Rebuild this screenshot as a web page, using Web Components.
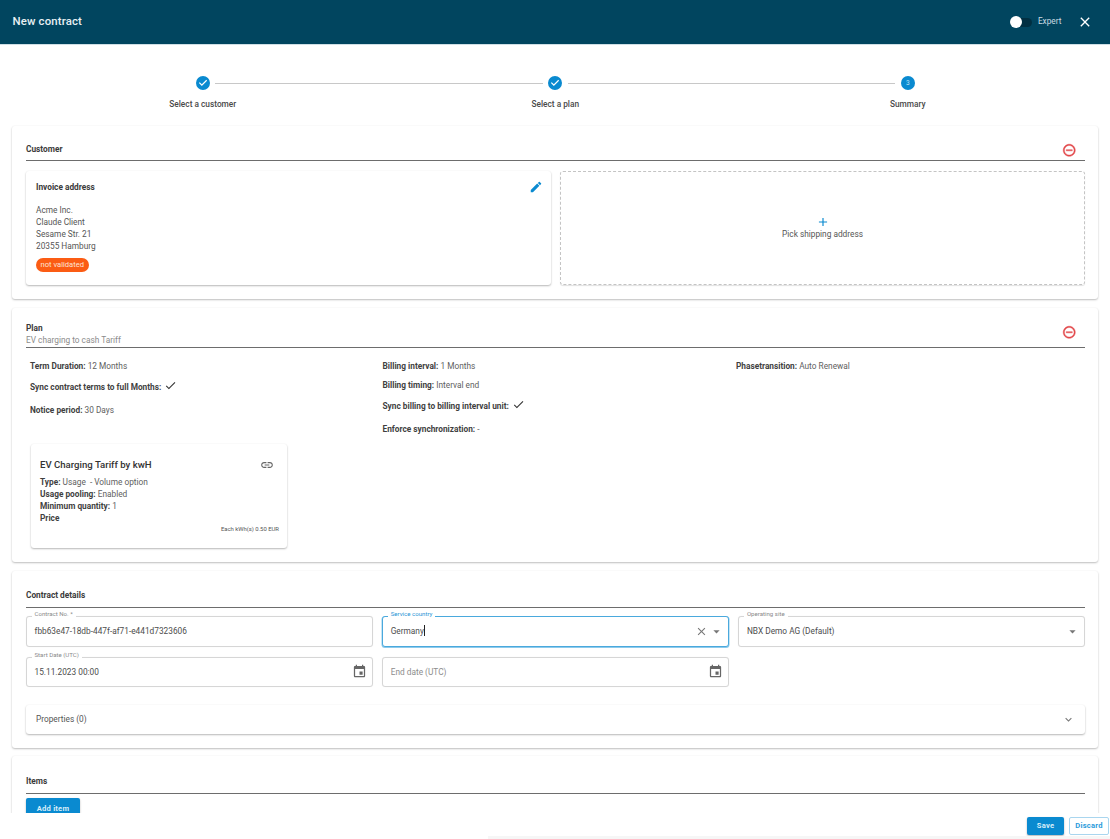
<!DOCTYPE html>
<html lang="en"><head><meta charset="utf-8"><title>New contract</title>
<style>html,body{margin:0;height:100%;background:#fff;font-family:Roboto,"Liberation Sans",sans-serif;color:#444}</style>
</head><body>
<contract-app>
  <contract-header slot="header" title="New contract"></contract-header>
  <step-bar>
    <step-item done>Select a customer</step-item>
    <step-item done>Select a plan</step-item>
    <step-item num="3">Summary</step-item>
  </step-bar>

  <section-card heading="Customer" removable style="--top:16.5px;--gap:5px;--after:10px;--bottom:14px;--ib:-2.25px">
    <div style="display:grid;grid-template-columns:1fr 1fr;gap:9px">
      <address-card></address-card>
      <pick-card>Pick shipping address</pick-card>
    </div>
  </section-card>

  <section-card heading="Plan" sub="EV charging to cash Tariff" removable style="--top:14px;--gap:0px;--after:12px;--bottom:14px;--ib:7.75px">
    <plan-terms></plan-terms>
    <plan-item></plan-item>
  </section-card>

  <section-card heading="Contract details" style="--top:18px;--gap:6px;--after:8px;--bottom:14px">
    <field-grid>
      <text-field label="Contract No. *" value="fbb63e47-18db-447f-af71-e441d7323606"></text-field>
      <text-field label="Service country" value="Germany" focused clearable dropdown></text-field>
      <text-field label="Operating site" value="NBX Demo AG (Default)" dropdown></text-field>
      <text-field label="Start Date (UTC)" value="15.11.2023 00:00" date short></text-field>
      <text-field placeholder="End date (UTC)" date short></text-field>
    </field-grid>
    <expand-row>Properties (0)</expand-row>
  </section-card>

  <section-card heading="Items" style="--top:19px;--gap:6px;--after:4px;--bottom:14px;margin-top:-1px">
    <ui-button primary style="--w:54px;--h:22px">Add item</ui-button>
  </section-card>

  <form-footer slot="footer"></form-footer>
</contract-app>

<script>
const ICONS={
 edit:'M3 17.25V21h3.75L17.81 9.94l-3.75-3.75L3 17.25zM20.71 7.04c.39-.39.39-1.02 0-1.41l-2.34-2.34c-.39-.39-1.02-.39-1.41 0l-1.83 1.83 3.75 3.75 1.83-1.83z',
 close:'M19 6.41 17.59 5 12 10.59 6.41 5 5 6.41 10.59 12 5 17.59 6.41 19 12 13.41 17.59 19 19 17.59 13.41 12z',
 remove:'M7 11v2h10v-2H7zm5-9C6.48 2 2 6.48 2 12s4.48 10 10 10 10-4.48 10-10S17.52 2 12 2zm0 18c-4.41 0-8-3.59-8-8s3.59-8 8-8 8 3.59 8 8-3.59 8-8 8z',
 check:'M9 16.17 4.83 12l-1.42 1.41L9 19 21 7l-1.41-1.41z',
 link:'M3.9 12c0-1.71 1.39-3.1 3.1-3.1h4V7H7c-2.76 0-5 2.24-5 5s2.24 5 5 5h4v-1.9H7c-1.71 0-3.1-1.39-3.1-3.1zM8 13h8v-2H8v2zm9-6h-4v1.9h4c1.71 0 3.1 1.39 3.1 3.1s-1.39 3.1-3.1 3.1h-4V17h4c2.76 0 5-2.24 5-5s-2.24-5-5-5z',
 event:'M17 12h-5v5h5v-5zM16 1v2H8V1H6v2H5c-1.11 0-1.99.9-1.99 2L3 19c0 1.1.89 2 2 2h14c1.1 0 2-.9 2-2V5c0-1.1-.9-2-2-2h-1V1h-2zm3 18H5V8h14v11z',
 drop:'M7 10l5 5 5-5z',
 more:'M16.59 8.59 12 13.17 7.41 8.59 6 10l6 6 6-6z',
 add:'M19 13h-6v6h-2v-6H5v-2h6V5h2v6h6v2z',
 stepdone:'M12 0a12 12 0 1 0 0 24 12 12 0 0 0 0-24zm-2 17l-5-5 1.4-1.4 3.6 3.6 7.6-7.6L19 8l-9 9z'
};
class Base extends HTMLElement{
  render(html){ if(!this.shadowRoot) this.attachShadow({mode:'open'}); this.shadowRoot.innerHTML=html; }
}
const def=(n,c)=>customElements.define(n,c);

def('ui-icon',class extends Base{connectedCallback(){
  const n=this.getAttribute('name');
  this.render(`<style>:host{display:inline-flex;flex:none;width:var(--s,16px);height:var(--s,16px);color:var(--c,currentColor)}svg{width:100%;height:100%;fill:currentColor;stroke:currentColor;stroke-width:var(--sw,0);display:block}</style><svg viewBox="0 0 24 24" aria-hidden="true"><path d="${ICONS[n]}"/></svg>`);
}});

def('contract-app',class extends Base{connectedCallback(){
  this.render(`<style>
   :host{display:flex;flex-direction:column;height:839px;width:1110px;overflow:hidden;background:#fff}
   .scroll{flex:1;min-height:0;overflow:hidden;padding:0 12px;display:flex;flex-direction:column;gap:9px}
  </style><slot name="header"></slot><div class="scroll"><slot></slot></div><slot name="footer"></slot>`);
}});

def('contract-header',class extends Base{connectedCallback(){
  this.render(`<style>
   :host{display:flex;flex:none;align-items:center;height:45px;background:#01455f;color:#fff;padding:0 17.5px 0 12.5px;box-sizing:border-box;border-bottom:1px solid #cfdfe5}
   h1{font:500 11.4px/14px Roboto,sans-serif;margin:0 auto 2px 0;letter-spacing:.15px;color:#e8f0f3}
   .track{width:22px;height:9px;border-radius:5px;background:#012f42;display:flex;align-items:center;margin-right:6px}
   .thumb{width:12px;height:12px;border-radius:50%;background:#fff}
   .t{font:400 8.3px/12px Roboto,sans-serif;color:#c9dbe2;margin:-3px 15px 0 0}
   ui-icon{--s:16px}
  </style><h1>${this.getAttribute('title')}</h1><div class="track"><div class="thumb"></div></div><span class="t">Expert</span><ui-icon name="close"></ui-icon>`);
}});

def('step-bar',class extends Base{connectedCallback(){
  this.render(`<style>:host{display:grid;flex:none;grid-template-columns:repeat(3,352.5px);justify-content:center;padding-top:31px;margin:0 0 7px .5px}</style><slot></slot>`);
}});
def('step-item',class extends Base{connectedCallback(){
  const done=this.hasAttribute('done'),last=!done;
  const first=!this.previousElementSibling;
  this.render(`<style>
   :host{display:flex;flex-direction:column;align-items:stretch}
   .row{display:flex;align-items:center;height:14px}
   .seg{flex:1;height:1px;background:#c8c8c8}
   .off{background:transparent}
   .l{margin-right:5.5px}.r{margin-left:5.5px}
   .c{width:14px;height:14px;flex:none;color:#0a8ad0;--s:14px;display:flex}
   .n{width:14px;height:14px;flex:none;border-radius:50%;background:#0a8ad0;color:#bfe0f3;font:400 6.6px/14px Roboto,sans-serif;text-align:center}
   .lb{text-align:center;font:500 8.3px/12px Roboto,sans-serif;color:#4a4a4a;margin-top:8px}
  </style><div class="row"><span class="seg l ${first?'off':''}"></span>${done?'<span class="c"><ui-icon name="stepdone"></ui-icon></span>':`<span class="n">${this.getAttribute('num')}</span>`}<span class="seg r ${last?'off':''}"></span></div><div class="lb"><slot></slot></div>`);
}});

def('section-card',class extends Base{connectedCallback(){
  const sub=this.getAttribute('sub');
  this.render(`<style>
   :host{display:block;flex:none;background:#fff;border-radius:3px;padding:var(--top) 13px var(--bottom) 14px;box-shadow:0 1px 2px rgba(0,0,0,.25),0 0 2px rgba(0,0,0,.04)}
   .head{display:flex;align-items:flex-end;border-bottom:1px solid #6d6d6d;padding-bottom:var(--gap);margin-bottom:var(--after)}
   .txt{flex:1}
   h2{font:700 8.3px/12px Roboto,sans-serif;margin:0;color:#3a3a3a}
   p{font:400 8.3px/13px Roboto,sans-serif;margin:0;color:#8b8b8b}
   ui-icon{--s:14.5px;--c:#e2474a;--sw:.7;margin:0 9px var(--ib,0) 0}
  </style><div class="head"><div class="txt"><h2>${this.getAttribute('heading')}</h2>${sub?`<p>${sub}</p>`:''}</div>${this.hasAttribute('removable')?'<ui-icon name="remove"></ui-icon>':''}</div><slot></slot>`);
}});

def('address-card',class extends Base{connectedCallback(){
  this.render(`<style>
   :host{display:flex;justify-content:space-between;height:114px;box-sizing:border-box;padding:10px 8px 0 10px;border-radius:3px;background:#fff;box-shadow:0 1px 2px rgba(0,0,0,.28),0 0 2px rgba(0,0,0,.04);font:400 8.3px/12.3px Roboto,sans-serif;color:#555}
   b{display:block;font-weight:700;color:#3a3a3a;margin-bottom:10.5px}
   .chip{display:inline-block;margin-top:5px;background:#fb5c14;color:#fde3d6;border-radius:8px;padding:0 4.5px;font:400 7.6px/14px Roboto,sans-serif}
   ui-icon{--s:14px;--c:#0a8ad0;margin-top:-1px}
  </style><div><b>Invoice address</b>Acme Inc.<br>Claude Client<br>Sesame Str. 21<br>20355 Hamburg<br><span class="chip">not validated</span></div><ui-icon name="edit"></ui-icon>`);
}});

def('pick-card',class extends Base{connectedCallback(){
  this.render(`<style>
   :host{display:flex;flex-direction:column;align-items:center;justify-content:center;height:114px;box-sizing:border-box;border:1px dashed #c4c4c4;border-radius:3px;box-shadow:0 1px 1px rgba(0,0,0,.12);font:400 8.3px/12px Roboto,sans-serif;color:#555;padding-bottom:1px}
   ui-icon{--s:14px;--c:#0a8ad0;margin-bottom:-1px}
  </style><ui-icon name="add"></ui-icon><slot></slot>`);
}});

def('kv-line',class extends Base{connectedCallback(){
  this.render(`<style>
   :host{display:flex;align-items:center;height:var(--h,12px);margin-top:var(--m,0);font:400 8.3px/12px Roboto,sans-serif;color:#606060;white-space:pre}
   b{font-weight:700;color:#3f3f3f}
   ui-icon{--s:13px;--c:#333;margin-left:3px;margin-top:-2px}
  </style><b>${this.getAttribute('k')}:</b><slot></slot>${this.hasAttribute('check')?'<ui-icon name="check"></ui-icon>':''}`);
}});

def('plan-terms',class extends Base{connectedCallback(){
  this.render(`<style>:host{display:grid;grid-template-columns:352.5px 353.5px 1fr;padding-left:4px;height:84px;align-items:start}</style>
  <div><kv-line k="Term Duration"> 12 Months</kv-line><kv-line k="Sync contract terms to full Months" check style="--m:9px"></kv-line><kv-line k="Notice period" style="--m:11px"> 30 Days</kv-line></div>
  <div><kv-line k="Billing interval"> 1 Months</kv-line><kv-line k="Billing timing" style="--m:7px"> Interval end</kv-line><kv-line k="Sync billing to billing interval unit" check style="--m:9px"></kv-line><kv-line k="Enforce synchronization" style="--m:11px"> -</kv-line></div>
  <div><kv-line k="Phasetransition"> Auto Renewal</kv-line></div>`);
}});

def('plan-item',class extends Base{connectedCallback(){
  this.render(`<style>
   :host{display:block;width:256px;height:104px;margin-left:5px;box-sizing:border-box;padding:15px 8px 0 9px;border-radius:3px;box-shadow:0 1px 2px rgba(0,0,0,.28),0 0 2px rgba(0,0,0,.04);font:400 8.3px/12px Roboto,sans-serif;color:#606060}
   .t{display:flex;justify-content:space-between;align-items:center;padding-right:5px;height:12px;margin-bottom:5px}
   h3{margin:0;font:500 9.6px/12px Roboto,sans-serif;color:#333}
   ui-icon{--s:14px;--c:#666}
   b{font-weight:700;color:#3f3f3f}
   .p{text-align:right;font-size:5.9px;line-height:10px;color:#555}
  </style><div class="t"><h3>EV Charging Tariff by kwH</h3><ui-icon name="link"></ui-icon></div>
  <div><b>Type:</b> Usage&nbsp; - Volume option</div><div><b>Usage pooling:</b> Enabled</div><div><b>Minimum quantity:</b> 1</div><div><b>Price</b></div><div class="p">Each kWh(s) 0.50 EUR</div>`);
}});

def('field-grid',class extends Base{connectedCallback(){
  this.render(`<style>:host{display:grid;grid-template-columns:346.7px 346.7px 346.6px;column-gap:9.5px;row-gap:10px}</style><slot></slot>`);
}});

def('text-field',class extends Base{connectedCallback(){
  const a=n=>this.getAttribute(n), h=n=>this.hasAttribute(n);
  const f=h('focused');
  this.render(`<style>
   :host{display:flex;align-items:center;position:relative;height:${h('short')?30:31}px;box-sizing:border-box;padding:0 9px 0 7.5px;border-radius:3px;border:1px solid ${f?'#4aa9dd':'#d6d6d6'};box-shadow:${f?'0 .5px 0 .5px #8ecbec':'0 0 1px rgba(0,0,0,.08)'};font:400 8.3px/12px Roboto,sans-serif;color:#4c4c4c;background:#fff}
   label{position:absolute;left:4.5px;top:-7px;padding:0 3px;background:#fff;font:400 6.1px/8px Roboto,sans-serif;color:${f?'#1f95d6':'#8a8a8a'}}
   .v{flex:1}
   .ph{color:#8d8d8d}
   .caret{display:inline-block;width:1px;height:11px;background:#222;vertical-align:-2px}
   .x{--s:13px;--c:#777;margin-right:1px}
   .d{--s:15px;--c:#777;margin-right:-5.5px}
   .e{--s:15px;--c:#666;margin-right:-4px}
  </style>${a('label')?`<label>${a('label')}</label>`:''}<span class="v ${a('value')?'':'ph'}">${a('value')||a('placeholder')}${f?'<span class="caret"></span>':''}</span>${h('clearable')?'<ui-icon class="x" name="close"></ui-icon>':''}${h('dropdown')?'<ui-icon class="d" name="drop"></ui-icon>':''}${h('date')?'<ui-icon class="e" name="event"></ui-icon>':''}`);
}});

def('expand-row',class extends Base{connectedCallback(){
  this.render(`<style>
   :host{display:flex;align-items:center;justify-content:space-between;height:29px;margin-top:18px;padding:0 10px;border-radius:3px;box-shadow:0 1px 2px rgba(0,0,0,.28),0 0 2px rgba(0,0,0,.04);font:400 8.3px/12px Roboto,sans-serif;color:#555}
   ui-icon{--s:13px;--c:#777}
  </style><slot></slot><ui-icon name="more"></ui-icon>`);
}});

def('ui-button',class extends Base{connectedCallback(){
  const p=this.hasAttribute('primary');
  this.render(`<style>
   :host{display:flex;flex:none;align-items:center;justify-content:center;width:var(--w);height:var(--h);box-sizing:border-box;border-radius:2px;font:700 7.6px/12px Roboto,sans-serif;letter-spacing:.2px;${p?'background:#0a8ad0;color:#d8edf9;box-shadow:0 1px 2px rgba(0,0,0,.3)':'background:#fff;color:#2a9bdb;border:1px solid #a9d6ef'}}
  </style><slot></slot>`);
}});

def('form-footer',class extends Base{connectedCallback(){
  this.render(`<style>
   :host{display:flex;flex-direction:column;flex:none;height:26px;background:#fff}
   .btns{display:flex;justify-content:flex-end;gap:5px;padding:4px 1px 0 0;height:22px;box-sizing:border-box}
   .strip{height:3px;margin:1px 0 0 488px;background:#f6f6f6}
  </style><div class="btns"><ui-button primary style="--w:37px;--h:18px">Save</ui-button><ui-button style="--w:40px;--h:18px">Discard</ui-button></div><div class="strip"></div>`);
}});
</script>
</body></html>
